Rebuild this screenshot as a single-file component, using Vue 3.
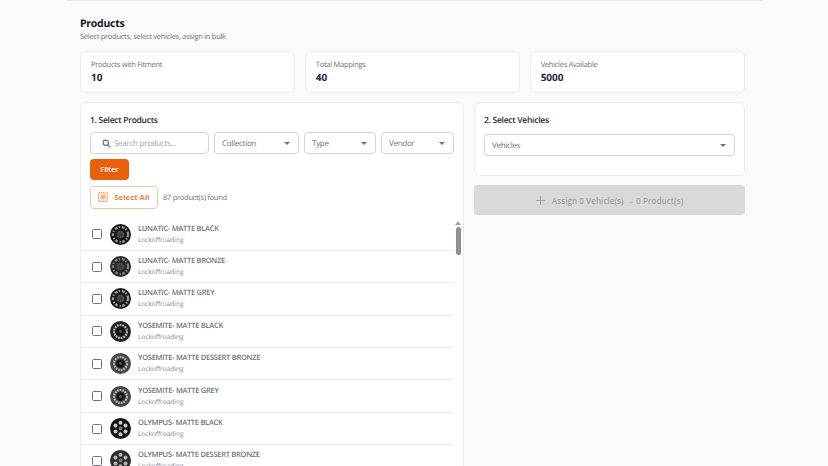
<script setup>
// Listado de productos con su tipo de llanta
const productos = [
  { nombre: 'LUNATIC- MATTE BLACK', tipo: 'a', aro: '#17171a', luz: '#98989c' },
  { nombre: 'LUNATIC- MATTE BRONZE', tipo: 'a', aro: '#29272a', luz: '#858384' },
  { nombre: 'LUNATIC- MATTE GREY', tipo: 'a', aro: '#1c1c1f', luz: '#a0a0a4' },
  { nombre: 'YOSEMITE- MATTE BLACK', tipo: 'b', aro: '#232326', luz: '#bcbcc0' },
  { nombre: 'YOSEMITE- MATTE DESSERT BRONZE', tipo: 'b', aro: '#4a4846', luz: '#b4b2b0' },
  { nombre: 'YOSEMITE- MATTE GREY', tipo: 'b', aro: '#454548', luz: '#bcbcc0' },
  { nombre: 'OLYMPUS- MATTE BLACK', tipo: 'c', aro: '#141416', luz: '#c8c8ca' },
  { nombre: 'OLYMPUS- MATTE DESSERT BRONZE', tipo: 'c', aro: '#2c2a2c', luz: '#b8b6b4' }
];

const stats = [
  { label: 'Products with Fitment', valor: 10 },
  { label: 'Total Mappings', valor: 40 },
  { label: 'Vehicles Available', valor: 5000 }
];

// Ventanas de la llanta OLYMPUS
const ventanas = Array.from({ length: 6 }, (_, i) => {
  const ang = (i / 6) * Math.PI * 2 + Math.PI / 2;
  return { x: 12 + Math.cos(ang) * 6.6, y: 12 + Math.sin(ang) * 6.6 };
});
</script>

<template>
  <div class="page">
    <div class="top-line"></div>
    <h1>Products</h1>
    <p class="sub">Select products, select vehicles, assign in bulk</p>

    <div class="stats">
      <div v-for="s in stats" :key="s.label" class="stat">
        <span>{{ s.label }}</span>
        <strong>{{ s.valor }}</strong>
      </div>
    </div>

    <div class="cols">
      <section class="panel left">
        <h2>1. Select Products</h2>
        <div class="filters">
          <div class="field search">
            <svg width="9" height="9" viewBox="0 0 24 24" fill="none" stroke="#6b7280" stroke-width="3"><circle cx="10" cy="10" r="7"/><path d="M15.5 15.5 22 22"/></svg>
            <span>Search products...</span>
          </div>
          <div class="field coll"><span>Collection</span><i class="caret"></i></div>
          <div class="field type"><span>Type</span><i class="caret"></i></div>
          <div class="field vend"><span>Vendor</span><i class="caret"></i></div>
        </div>
        <button class="btn-filter">Filter</button>
        <div class="select-row">
          <button class="btn-all">
            <svg width="10" height="10" viewBox="0 0 10 10" fill="none"><rect x="0.5" y="0.5" width="9" height="9" fill="#fbe3d3" stroke="#f3a877" stroke-dasharray="1.5 0.6"/><rect x="3" y="3" width="4" height="4" fill="#f5b48a"/></svg>
            <span>Select All</span>
          </button>
          <span class="found">87 product(s) found</span>
        </div>

        <div class="list-wrap">
          <ul class="list">
            <li v-for="p in productos" :key="p.nombre">
              <span class="check"></span>
              <svg class="wheel" width="21" height="21" viewBox="0 0 24 24">
                <circle cx="12" cy="12" r="12" :fill="p.aro"/>
                <template v-if="p.tipo === 'a'">
                  <circle cx="12" cy="12" r="8.6" fill="none" :stroke="p.luz" stroke-width="2.6" stroke-dasharray="3 1.6 1.4 2.4"/>
                  <circle cx="12" cy="12" r="4.4" fill="#3a3a3d"/>
                  <circle cx="12" cy="12" r="3.2" fill="none" :stroke="p.luz" stroke-width="0.8" stroke-dasharray="1 1.2"/>
                </template>
                <template v-else-if="p.tipo === 'b'">
                  <circle cx="12" cy="12" r="7.4" fill="none" :stroke="p.luz" stroke-width="2.4" stroke-dasharray="2 1"/>
                  <circle cx="12" cy="12" r="5" fill="#141416"/>
                  <circle cx="12" cy="12" r="1.6" fill="#55555a"/>
                </template>
                <template v-else>
                  <circle v-for="(v, i) in ventanas" :key="i" :cx="v.x" :cy="v.y" r="2.3" :fill="p.luz"/>
                  <circle cx="12" cy="12" r="2.2" fill="#77777b"/>
                </template>
              </svg>
              <div class="txt">
                <span class="name">{{ p.nombre }}</span>
                <span class="vendor">Lockoffroading</span>
              </div>
            </li>
          </ul>
          <div class="scroll">
            <i class="arrow"></i>
            <i class="thumb"></i>
          </div>
        </div>
      </section>

      <div class="right">
        <section class="panel veh">
          <h2>2. Select Vehicles</h2>
          <div class="field full"><span>Vehicles</span><i class="caret"></i></div>
        </section>
        <button class="btn-assign">
          <svg width="9" height="9" viewBox="0 0 9 9" stroke="#a3a3a3" stroke-width="1"><path d="M4.5 0v9M0 4.5h9"/></svg>
          <span>Assign 0 Vehicle(s) → 0 Product(s)</span>
        </button>
      </div>
    </div>
  </div>
</template>

<style scoped>
.page { position: relative; height: 466px; overflow: hidden; box-sizing: border-box; padding: 18px 83px 0 80px; background: #fafafa; font-family: "Open Sans", sans-serif; color: #111827; text-rendering: geometricPrecision; letter-spacing: -0.27px; }
.top-line { position: absolute; top: 0; left: 66px; width: 696px; height: 1px; background: #ececec; }

h1 { margin: 0; font-size: 10.5px; line-height: 12px; font-weight: 700; }
.sub { margin: 2px 0 0; font-size: 7.5px; line-height: 11px; color: #6b7280; }

.stats { display: grid; grid-template-columns: repeat(3, 1fr); gap: 9.5px; margin-top: 8px; }
.stat { height: 42px; box-sizing: border-box; padding: 8px 10px 0; background: #fff; border: 1px solid #ececec; border-radius: 6px; }
.stat span { display: block; font-size: 7.5px; line-height: 11px; color: #6b7280; }
.stat strong { display: block; font-size: 10px; line-height: 13px; font-weight: 700; letter-spacing: 0; color: #1f2937; }

.cols { display: grid; grid-template-columns: 384px 1fr; gap: 10px; margin-top: 9px; }
.panel { background: #fff; border: 1px solid #ececec; border-radius: 6px; box-sizing: border-box; }
.left { padding: 12px 9px 0; height: 380px; }
h2 { margin: 0; font-size: 8.5px; line-height: 12px; font-weight: 600; color: #1f2937; }

.filters { display: flex; gap: 5px; margin-top: 5px; }
.field { display: flex; align-items: center; box-sizing: border-box; height: 21.5px; padding: 1px 7px 0; background: #fff; border: 1px solid #d4d4d8; border-radius: 4px; font-size: 8px; color: #6b7280; }
.field span { flex: 1; }
.search { width: 119px; gap: 3px; padding-left: 11px; }
.search span { color: #9ca3af; }
.coll { width: 85px; }
.type { width: 72px; }
.vend { width: 73px; }
.caret { width: 0; height: 0; margin-right: 1px; border: 3px solid transparent; border-top: 3px solid #6b7280; border-bottom: 0; }

.btn-filter { display: block; margin-top: 5px; width: 39px; height: 21px; padding: 0; background: #ea5f0c; color: #fff; border: 0; border-radius: 4px; font: 600 7.5px "Open Sans", sans-serif; }
.select-row { display: flex; align-items: center; gap: 5px; margin-top: 6px; }
.btn-all { display: flex; align-items: center; justify-content: center; gap: 6px; width: 68px; height: 23px; padding: 0 0 1px; background: #fff; border: 1px solid #f3c7a8; border-radius: 4px; color: #ef7f3a; font: 700 7.8px "Open Sans", sans-serif; }
.found { padding-top: 1px; font-size: 7.5px; color: #6b7280; }

.list-wrap { position: relative; margin: 10px -9px 0; }
.list { list-style: none; margin: 0; padding: 0 9px 0 0; }
.list li { display: flex; align-items: center; height: 32.4px; box-sizing: border-box; padding-left: 11px; border-bottom: 1px solid #ececec; }
.check { width: 8px; height: 8px; border: 1px solid #6b7280; border-radius: 1.5px; flex: none; }
.wheel { margin-left: 8px; flex: none; }
.txt { margin-left: 7px; display: flex; flex-direction: column; }
.name { font-size: 7.5px; line-height: 11px; font-weight: 600; color: #6b7280; }
.vendor { font-size: 6.5px; line-height: 10px; letter-spacing: 0; color: #7b8794; }

.scroll { position: absolute; top: 0; right: 1px; width: 8px; display: flex; flex-direction: column; align-items: center; }
.arrow { width: 0; height: 0; margin-top: 2px; border: 3px solid transparent; border-bottom: 4px solid #9ca3af; border-top: 0; }
.thumb { width: 5px; height: 28px; margin-top: 2px; background: #8b8f96; border-radius: 3px; }

.right { display: flex; flex-direction: column; gap: 9px; }
.veh { height: 74px; padding: 12px 9px 0; }
.full { margin-top: 7px; }
.btn-assign { display: flex; align-items: center; justify-content: center; gap: 7px; height: 30px; padding: 0; background: #d9d9d9; border: 0; border-radius: 4px; color: #a3a3a3; font: 600 8.2px "Open Sans", sans-serif; }
</style>

<style>
body { background: #fafafa; }
</style>
